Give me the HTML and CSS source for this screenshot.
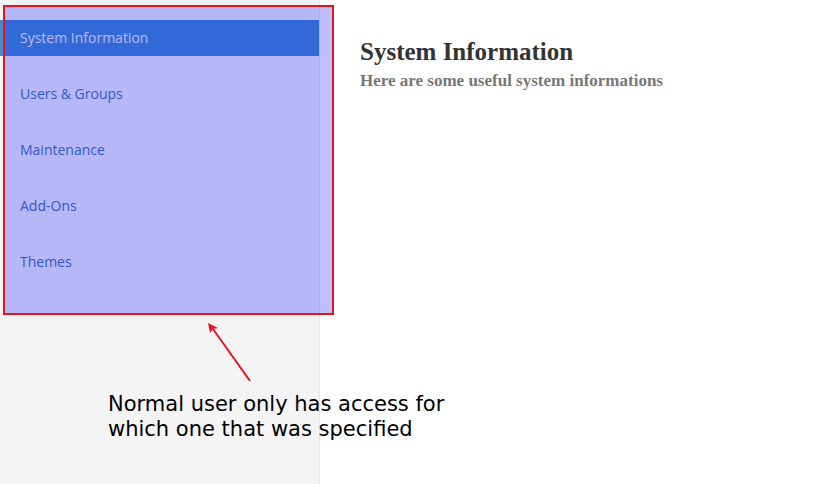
FILE: index.html
```html
<!DOCTYPE html>
<html lang="en">
<head>
<meta charset="utf-8">
<title>System Information</title>
<link rel="stylesheet" href="styles.css">
</head>
<body>
<div class="layout">
  <nav class="sidebar" aria-label="Settings">
    <ul class="menu">
      <li><a class="menu-link active" href="#system" aria-current="page">System Information</a></li>
      <li><a class="menu-link" href="#users">Users &amp; Groups</a></li>
      <li><a class="menu-link" href="#maintenance">Maintenance</a></li>
      <li><a class="menu-link" href="#addons">Add-Ons</a></li>
      <li><a class="menu-link" href="#themes">Themes</a></li>
    </ul>
  </nav>
  <main class="content">
    <h1>System Information</h1>
    <p class="subtitle">Here are some useful system informations</p>
  </main>
  <div class="highlight"></div>
  <svg class="arrow" width="50" height="66" viewBox="0 0 50 66" aria-hidden="true">
    <path d="M44 61 7 9" fill="none" stroke="#e8121c" stroke-width="2"/>
    <path d="M2 3 4 13 7 9 12 8Z" fill="#e8121c"/>
  </svg>
  <p class="note">Normal user only has access for<br>which one that was specified</p>
</div>
</body>
</html>
```

FILE: styles.css
```css
* {
  box-sizing: border-box;
}

body {
  margin: 0;
  background: #fff;
}

.layout {
  position: relative;
  display: flex;
  min-height: 100vh;
}

.sidebar {
  flex: 0 0 320px;
  padding-top: 20px;
  background: #f4f4f4;
  border-right: 1px solid #e9e9e9;
}

.menu {
  display: flex;
  flex-direction: column;
  gap: 20px;
  margin: 0;
  padding: 0;
  list-style: none;
}

.menu-link {
  display: block;
  padding: 0 20px;
  color: #3f7ab4;
  font: 14px/36px "Open Sans", sans-serif;
  text-decoration: none;
}

.menu-link.active {
  background: #448cc8;
  color: #f4f4f4;
}

.content {
  flex: 1;
  padding: 36px 40px;
}

h1 {
  margin: 0;
  color: #333;
  font: bold 25px/32px "Liberation Serif", serif;
}

.subtitle {
  margin: 0;
  color: #777;
  font: bold 17px/26px "Liberation Serif", serif;
}

/* Annotations drawn over the page */
.highlight {
  position: absolute;
  top: 5px;
  left: 3px;
  width: 331px;
  height: 310px;
  border: 2px solid #e8121c;
  background: rgba(0, 0, 255, 0.25);
  background-clip: padding-box;
}

.arrow {
  position: absolute;
  top: 320px;
  left: 206px;
}

.note {
  position: absolute;
  top: 392px;
  left: 108px;
  margin: 0;
  color: #000;
  font: 21px/25px "DejaVu Sans", sans-serif;
}
```
